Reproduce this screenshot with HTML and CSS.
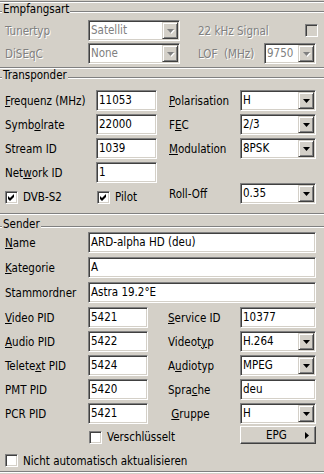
FILE: index.html
```html
<!DOCTYPE html>
<html lang="de">
<head>
    <meta charset="UTF-8">
    <title>Kanal bearbeiten</title>
    <link rel="stylesheet" href="styles.css">
</head>
<body>
<div class="panel">
    <div class="etch top-edge"></div>

    <!-- Empfangsart -->
    <div class="legend"><span class="lead"></span><span class="ltext">Empfangsart</span><span class="rule"></span></div>
    <div class="row r-first1">
        <span class="lbl w83 off">Tunertyp</span>
        <div class="combo w92 disabled"><span class="val">Satellit</span><span class="drop"><svg width="7" height="4" viewBox="0 0 7 4"><path d="M0 0h7L3.5 4z"/></svg></span></div>
        <span class="lbl w107 off gap18">22 kHz Signal</span>
        <span class="check disabled"></span>
    </div>
    <div class="row r-g2">
        <span class="lbl w83 off">DiSEqC</span>
        <div class="combo w92 disabled"><span class="val">None</span><span class="drop"><svg width="7" height="4" viewBox="0 0 7 4"><path d="M0 0h7L3.5 4z"/></svg></span></div>
        <span class="lbl w66 off gap18">LOF&nbsp; (MHz)</span>
        <div class="combo w52 disabled"><span class="val">9750</span><span class="drop"><svg width="7" height="4" viewBox="0 0 7 4"><path d="M0 0h7L3.5 4z"/></svg></span></div>
    </div>
    <div class="etch end1"></div>

    <!-- Transponder -->
    <div class="legend"><span class="lead"></span><span class="ltext">Transponder</span><span class="rule"></span></div>
    <div class="row r-first2">
        <span class="lbl w91"><u>F</u>requenz (MHz)</span>
        <div class="field w61">11053</div>
        <span class="lbl w71 gap12"><u>P</u>olarisation</span>
        <div class="combo w76"><span class="val">H</span><span class="drop"><svg width="7" height="4" viewBox="0 0 7 4"><path d="M0 0h7L3.5 4z"/></svg></span></div>
    </div>
    <div class="row r-g3">
        <span class="lbl w91">Symb<u>o</u>lrate</span>
        <div class="field w61">22000</div>
        <span class="lbl w71 gap12">F<u>E</u>C</span>
        <div class="combo w76"><span class="val">2/3</span><span class="drop"><svg width="7" height="4" viewBox="0 0 7 4"><path d="M0 0h7L3.5 4z"/></svg></span></div>
    </div>
    <div class="row r-g3">
        <span class="lbl w91">Stream ID</span>
        <div class="field w61">1039</div>
        <span class="lbl w71 gap12"><u>M</u>odulation</span>
        <div class="combo w76"><span class="val">8PSK</span><span class="drop"><svg width="7" height="4" viewBox="0 0 7 4"><path d="M0 0h7L3.5 4z"/></svg></span></div>
    </div>
    <div class="row r-g3">
        <span class="lbl w91">Net<u>w</u>ork ID</span>
        <div class="field w61">1</div>
    </div>
    <div class="row r-roll">
        <div class="opts">
            <label class="opt ow92"><span class="check"><svg width="9" height="9" viewBox="0 0 9 9"><path d="M1 3l2 2 4-4v3l-4 4-2-2z"/></svg></span>DVB-S2</label>
            <label class="opt ow72"><span class="check"><svg width="9" height="9" viewBox="0 0 9 9"><path d="M1 3l2 2 4-4v3l-4 4-2-2z"/></svg></span>Pilot</label>
        </div>
        <span class="lbl w71">Roll-Off</span>
        <div class="combo w76"><span class="val">0.35</span><span class="drop"><svg width="7" height="4" viewBox="0 0 7 4"><path d="M0 0h7L3.5 4z"/></svg></span></div>
    </div>
    <div class="etch end2"></div>

    <!-- Sender -->
    <div class="legend l3"><span class="lead"></span><span class="ltext">Sender</span><span class="rule"></span></div>
    <div class="row r-first3">
        <span class="lbl w83"><u>N</u>ame</span>
        <div class="field w228">ARD-alpha HD (deu)</div>
    </div>
    <div class="row r-g4">
        <span class="lbl w83"><u>K</u>ategorie</span>
        <div class="field w228">A</div>
    </div>
    <div class="row r-g4">
        <span class="lbl w83">Stammordner</span>
        <div class="field w228">Astra 19.2°E</div>
    </div>
    <div class="row r-g4">
        <span class="lbl w83"><u>V</u>ideo PID</span>
        <div class="field w60">5421</div>
        <span class="lbl w72 gap20"><u>S</u>ervice ID</span>
        <div class="field w76">10377</div>
    </div>
    <div class="row r-g3">
        <span class="lbl w83"><u>A</u>udio PID</span>
        <div class="field w60">5422</div>
        <span class="lbl w72 gap20">Videot<u>y</u>p</span>
        <div class="combo w76"><span class="val">H.264</span><span class="drop"><svg width="7" height="4" viewBox="0 0 7 4"><path d="M0 0h7L3.5 4z"/></svg></span></div>
    </div>
    <div class="row r-g3">
        <span class="lbl w83">Telete<u>x</u>t PID</span>
        <div class="field w60">5424</div>
        <span class="lbl w72 gap20">A<u>u</u>diotyp</span>
        <div class="combo w76"><span class="val">MPEG</span><span class="drop"><svg width="7" height="4" viewBox="0 0 7 4"><path d="M0 0h7L3.5 4z"/></svg></span></div>
    </div>
    <div class="row r-g3">
        <span class="lbl w83">PMT PID</span>
        <div class="field w60">5420</div>
        <span class="lbl w72 gap20">Spra<u>c</u>he</span>
        <div class="field w76">deu</div>
    </div>
    <div class="row r-g3">
        <span class="lbl w83">PCR PID</span>
        <div class="field w60">5421</div>
        <span class="lbl w72 gap20">&nbsp;<u>G</u>ruppe</span>
        <div class="combo w76"><span class="val">H</span><span class="drop"><svg width="7" height="4" viewBox="0 0 7 4"><path d="M0 0h7L3.5 4z"/></svg></span></div>
    </div>
    <div class="row r-epg">
        <label class="opt crypt"><span class="check"></span>Verschlüsselt</label>
        <div class="button w76"><span class="btext">EPG</span><svg width="4" height="7" viewBox="0 0 4 7"><path d="M0 0v7l4-3.5z"/></svg></div>
    </div>
    <div class="row r-auto">
        <label class="opt"><span class="check"></span>Nicht automatisch aktualisieren</label>
    </div>
    <div class="etch end3"></div>
</div>
</body>
</html>
```

FILE: styles.css
```css
* {
    margin: 0;
    padding: 0;
    box-sizing: border-box;
}

body {
    background: #d4d0c8;
    font-family: Tahoma, "DejaVu Sans Condensed", "DejaVu Sans", sans-serif;
    font-stretch: condensed;
    font-size: 11.5px;
    color: #000;
}

.panel {
    width: 324px;
    height: 474px;
    overflow: hidden;
}

u {
    text-decoration: underline;
    text-underline-offset: 1px;
}

/* etched separator lines */
.etch {
    height: 2px;
    border-top: 1px solid #808080;
    border-bottom: 1px solid #fff;
}

.top-edge {
    margin-top: 1px;
}

.end1 { margin-top: 3px; }
.end2 { margin-top: 9px; }
.end3 { margin-top: 4px; }

.legend {
    display: flex;
    align-items: flex-start;
    height: 13px;
    line-height: 13px;
}

.legend .lead,
.legend .rule {
    height: 2px;
    margin-top: 8px;
    border-top: 1px solid #808080;
    border-bottom: 1px solid #fff;
}

.legend .lead {
    width: 2px;
}

.legend .rule {
    flex: 1;
}

.legend .ltext {
    padding: 0 1px;
}

.l3 {
    margin-top: 3px;
}

/* rows */
.row {
    display: flex;
    align-items: center;
    height: 21px;
    padding-left: 5px;
}

.r-first1 { margin-top: 4px; }
.r-g2 { margin-top: 2px; }
.r-first2 { margin-top: 8px; }
.r-g3 { margin-top: 3px; }
.r-g4 { margin-top: 4px; }
.r-first3 { margin-top: 1px; }
.r-roll { margin-top: 0; }

.r-epg {
    margin-top: 2px;
    height: 18px;
}

.r-auto {
    margin-top: 10px;
    height: 13px;
}

.lbl {
    white-space: nowrap;
    flex: none;
}

.off {
    color: #808080;
    text-shadow: 1px 1px 0 #fff;
}

.gap12 { margin-left: 12px; }
.gap18 { margin-left: 18px; }
.gap20 { margin-left: 20px; }

.w52 { width: 52px; }
.w60 { width: 60px; }
.w61 { width: 61px; }
.w66 { width: 66px; }
.w71 { width: 71px; }
.w72 { width: 72px; }
.w76 { width: 76px; }
.w83 { width: 83px; }
.w91 { width: 91px; }
.w92 { width: 92px; }
.w107 { width: 107px; }
.w228 { width: 228px; }

/* sunken edit fields */
.field,
.combo {
    flex: none;
    height: 21px;
    background: #fff;
    border: 1px solid;
    border-color: #808080 #fff #fff #808080;
    box-shadow: inset 1px 1px #404040, inset -1px -1px #d4d0c8;
    padding: 1px 1px 1px 2px;
    line-height: 17px;
    white-space: nowrap;
    overflow: hidden;
}

.combo {
    display: flex;
    padding-right: 1px;
}

.combo .val {
    flex: 1;
}

.combo.disabled .val {
    color: #808080;
}

.drop {
    flex: none;
    width: 16px;
    height: 17px;
    background: #d4d0c8;
    border: 1px solid;
    border-color: #d4d0c8 #404040 #404040 #d4d0c8;
    box-shadow: inset 1px 1px #fff, inset -1px -1px #808080;
    display: flex;
    align-items: center;
    justify-content: center;
}

.drop svg {
    fill: #000;
    display: block;
}

.combo.disabled .drop svg {
    fill: #808080;
    filter: drop-shadow(1px 1px 0 #fff);
}

/* check boxes */
.check {
    flex: none;
    width: 13px;
    height: 13px;
    background: #fff;
    border: 1px solid;
    border-color: #808080 #fff #fff #808080;
    box-shadow: inset 1px 1px #404040, inset -1px -1px #d4d0c8;
    display: flex;
    align-items: center;
    justify-content: center;
}

.check.disabled {
    background: #d4d0c8;
}

.check svg {
    display: block;
    fill: #000;
}

.opts {
    display: flex;
    align-self: flex-start;
    margin-top: 7px;
}

.opt {
    display: flex;
    align-items: center;
    gap: 5px;
    white-space: nowrap;
}

.ow92 { width: 92px; }
.ow72 { width: 72px; }

.crypt {
    margin-left: 84px;
    width: 151px;
    align-self: flex-end;
}

/* raised push button */
.button {
    height: 18px;
    display: flex;
    align-items: center;
    justify-content: space-between;
    padding: 0 6px 0 25px;
    border: 1px solid;
    border-color: #fff #404040 #404040 #fff;
    box-shadow: inset -1px -1px #808080;
    background: #d4d0c8;
}

.button svg {
    display: block;
    fill: #000;
}
```
